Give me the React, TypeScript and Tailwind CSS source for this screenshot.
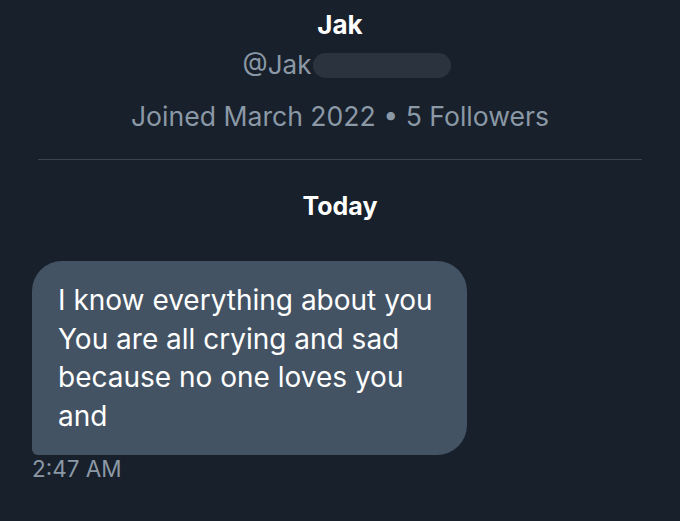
import React from 'react';

const font = { fontFamily: 'Inter, "Noto Sans", sans-serif' };

const App: React.FC = () => {
  return (
    <div className="w-[680px] h-[521px] bg-[#17202b] overflow-hidden" style={font}>
      <div className="flex flex-col items-center pt-[9px]">
        <h1 className="text-[26px] leading-[32px] font-bold text-white">Jak</h1>
        <div className="flex items-center mt-[9px] h-[30px] pl-[14px]">
          <span className="text-[26px] leading-[30px] text-[#8b98a5]">@Jak</span>
          <span className="ml-[2px] w-[138px] h-[25px] rounded-full bg-[#2b333e]" />
        </div>
        <p className="mt-[19px] text-[26.6px] leading-[34px] text-[#8b98a5]">
          Joined March 2022 • 5 Followers
        </p>
      </div>

      <div className="mx-[38px] mt-[26px] h-px bg-[#3a4450]" />

      <div className="flex justify-center mt-[30px]">
        <span className="text-[25px] leading-[32px] font-bold text-white">Today</span>
      </div>

      <div className="px-[32px] mt-[39px]">
        <div className="w-[435px] rounded-[30px] rounded-bl-[6px] bg-[#435364] pl-[26px] pr-[16px] pt-[20px] pb-[20px]">
          <p className="text-[28px] leading-[38.5px] text-white">
            I know everything about you
            <br />
            You are all crying and sad
            <br />
            because no one loves you
            <br />
            and
          </p>
        </div>
        <p className="mt-0 text-[22.5px] leading-[28px] text-[#8b98a5]">2:47 AM</p>
      </div>
    </div>
  );
};

export default App;
